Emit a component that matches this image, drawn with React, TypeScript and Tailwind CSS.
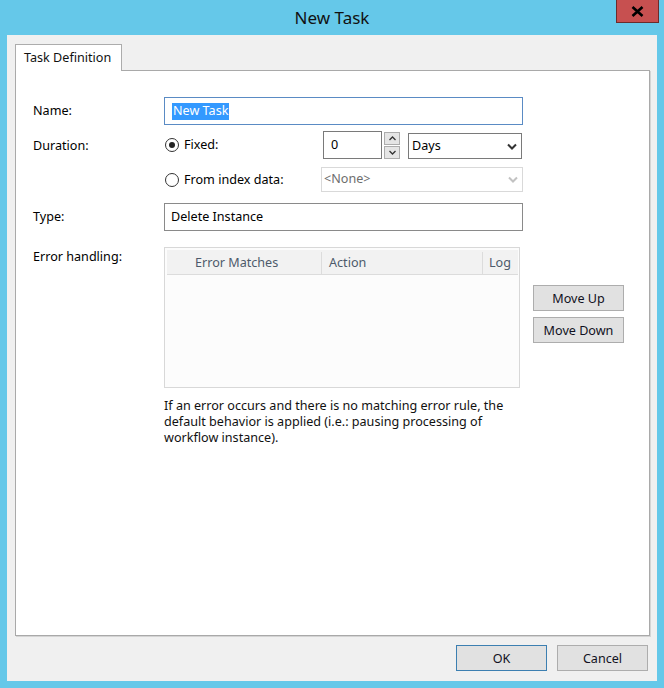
import React from "react";

function Radio({ checked }: { checked?: boolean }) {
  return (
    <span className="w-[14px] h-[14px] rounded-full border border-[#333333] bg-white flex items-center justify-center shrink-0">
      {checked && <span className="w-[6px] h-[6px] rounded-full bg-[#222222]" />}
    </span>
  );
}

function Chevron({ color = "#333333" }: { color?: string }) {
  return (
    <svg width="10" height="7" viewBox="0 0 10 7">
      <path d="M1 1.5 L5 5.5 L9 1.5" fill="none" stroke={color} strokeWidth="2" />
    </svg>
  );
}

function SmallArrow({ up }: { up?: boolean }) {
  return (
    <svg width="7" height="5" viewBox="0 0 7 5">
      <path d={up ? "M0.5 4 L3.5 1 L6.5 4" : "M0.5 1 L3.5 4 L6.5 1"} fill="none" stroke="#333333" strokeWidth="1.3" />
    </svg>
  );
}

function Btn({ children, def }: { children: React.ReactNode; def?: boolean }) {
  return (
    <div
      className={
        "w-[91px] h-[26px] bg-[#e1e1e1] border flex items-center justify-center pt-[2px] text-[12.6px] text-[#111122] " +
        (def ? "border-[#3c7fb1]" : "border-[#adadad]")
      }
    >
      {children}
    </div>
  );
}

export default function App() {
  return (
    <div className="w-[664px] h-[688px] bg-[#65c8e9] flex flex-col font-['Noto_Sans',sans-serif] text-[12.6px] text-black leading-none">
      {/* Title bar */}
      <div className="h-[35px] grid grid-cols-[1fr_auto_1fr] items-start">
        <div />
        <div className="pt-[7px] text-[17px] leading-[22px] text-[#111111]">New Task</div>
        <div className="flex justify-end">
          <div className="w-[43px] h-[23px] mr-[5px] bg-[#c75050] border border-t-0 border-[#6b2c2c] flex items-center justify-center">
            <svg width="13" height="11" viewBox="0 0 13 11">
              <path d="M1.5 1 L11.5 10 M11.5 1 L1.5 10" stroke="#000000" strokeWidth="2.6" />
            </svg>
          </div>
        </div>
      </div>

      {/* Client area */}
      <div className="mx-[7px] h-[646px] bg-[#f0f0f0] pt-[9px] pl-[8px] flex flex-col">
        {/* Tab */}
        <div className="flex">
          <div className="relative z-10 -mb-px w-[107px] h-[27px] bg-white border border-b-0 border-[#acacac] pl-[8px] flex items-center text-[#111111]">
            Task Definition
          </div>
        </div>

        {/* Panel */}
        <div className="w-[635px] h-[566px] bg-white border border-[#a9a9a9] shadow-[1px_1px_0_#d4d4d4] pt-[26px] pl-[17px] flex flex-col">
          {/* Name */}
          <div className="flex items-center h-[28px]">
            <div className="w-[131px] pt-[1px]">Name:</div>
            <div className="w-[359px] h-[28px] border border-[#5a8bc4] flex items-center pl-[7px]">
              <span className="bg-[#3399ff] text-white h-[17px] px-[1px] flex items-center">New Task</span>
            </div>
          </div>

          {/* Duration fixed */}
          <div className="flex items-center h-[28px] mt-[6px]">
            <div className="w-[131px] pt-[2px]">Duration:</div>
            <div className="w-[159px] flex items-center gap-[5px] pl-[1px]">
              <Radio checked />
              <span className="pt-[1px]">Fixed:</span>
            </div>
            <div className="w-[59px] h-[28px] border border-[#7a7a7a] bg-white flex items-center pl-[7px]">0</div>
            <div className="ml-[2px] w-[16px] h-[27px] flex flex-col gap-[1px]">
              <div className="flex-1 bg-[#e5e5e5] border border-[#acacac] flex items-center justify-center">
                <SmallArrow up />
              </div>
              <div className="flex-1 bg-[#e5e5e5] border border-[#acacac] flex items-center justify-center">
                <SmallArrow />
              </div>
            </div>
            <div className="ml-[8px] mt-[2px] w-[114px] h-[26px] border border-[#7a7a7a] bg-white flex items-center justify-between pl-[3px] pr-[4px]">
              <span>Days</span>
              <Chevron />
            </div>
          </div>

          {/* Duration index */}
          <div className="flex items-center h-[25px] mt-[8px]">
            <div className="w-[131px]" />
            <div className="w-[157px] flex items-center gap-[5px] pl-[1px]">
              <Radio />
              <span className="pt-[1px]">From index data:</span>
            </div>
            <div className="w-[202px] h-[25px] border border-[#d9d9d9] bg-white flex items-center justify-between pl-[2px] pr-[4px] text-[#6d6d6d]">
              <span>&lt;None&gt;</span>
              <Chevron color="#c2c2c2" />
            </div>
          </div>

          {/* Type */}
          <div className="flex items-center h-[28px] mt-[11px]">
            <div className="w-[131px]">Type:</div>
            <div className="w-[359px] h-[28px] border border-[#8a8a8a] bg-white flex items-center pl-[6px]">Delete Instance</div>
          </div>

          {/* Error handling */}
          <div className="flex items-start mt-[16px]">
            <div className="w-[131px] pt-[4px]">Error handling:</div>
            <div className="w-[356px] h-[141px] border border-[#d8d8d8] bg-[#fcfcfc] p-[2px]">
              <div className="h-[25px] w-[351px] bg-[#f2f2f2] border-b border-[#dcdcdc] flex pt-[2px] text-[#4d5a6b]">
                <div className="w-[155px] border-r border-[#dcdcdc] flex items-center pl-[28px]">Error Matches</div>
                <div className="w-[161px] border-r border-[#dcdcdc] flex items-center pl-[7px]">Action</div>
                <div className="flex-1 flex items-center pl-[6px]">Log</div>
              </div>
            </div>
            <div className="ml-[13px] mt-[38px] flex flex-col gap-[6px]">
              <Btn>Move Up</Btn>
              <Btn>Move Down</Btn>
            </div>
          </div>

          {/* Description */}
          <div className="ml-[131px] mt-[10px] leading-[16px] text-[#111111]">
            If an error occurs and there is no matching error rule, the
            <br />
            default behavior is applied (i.e.: pausing processing of
            <br />
            workflow instance).
          </div>
        </div>

        {/* Bottom buttons */}
        <div className="mt-[9px] flex justify-end gap-[10px] pr-[9px]">
          <Btn def>OK</Btn>
          <Btn>Cancel</Btn>
        </div>
      </div>
    </div>
  );
}
